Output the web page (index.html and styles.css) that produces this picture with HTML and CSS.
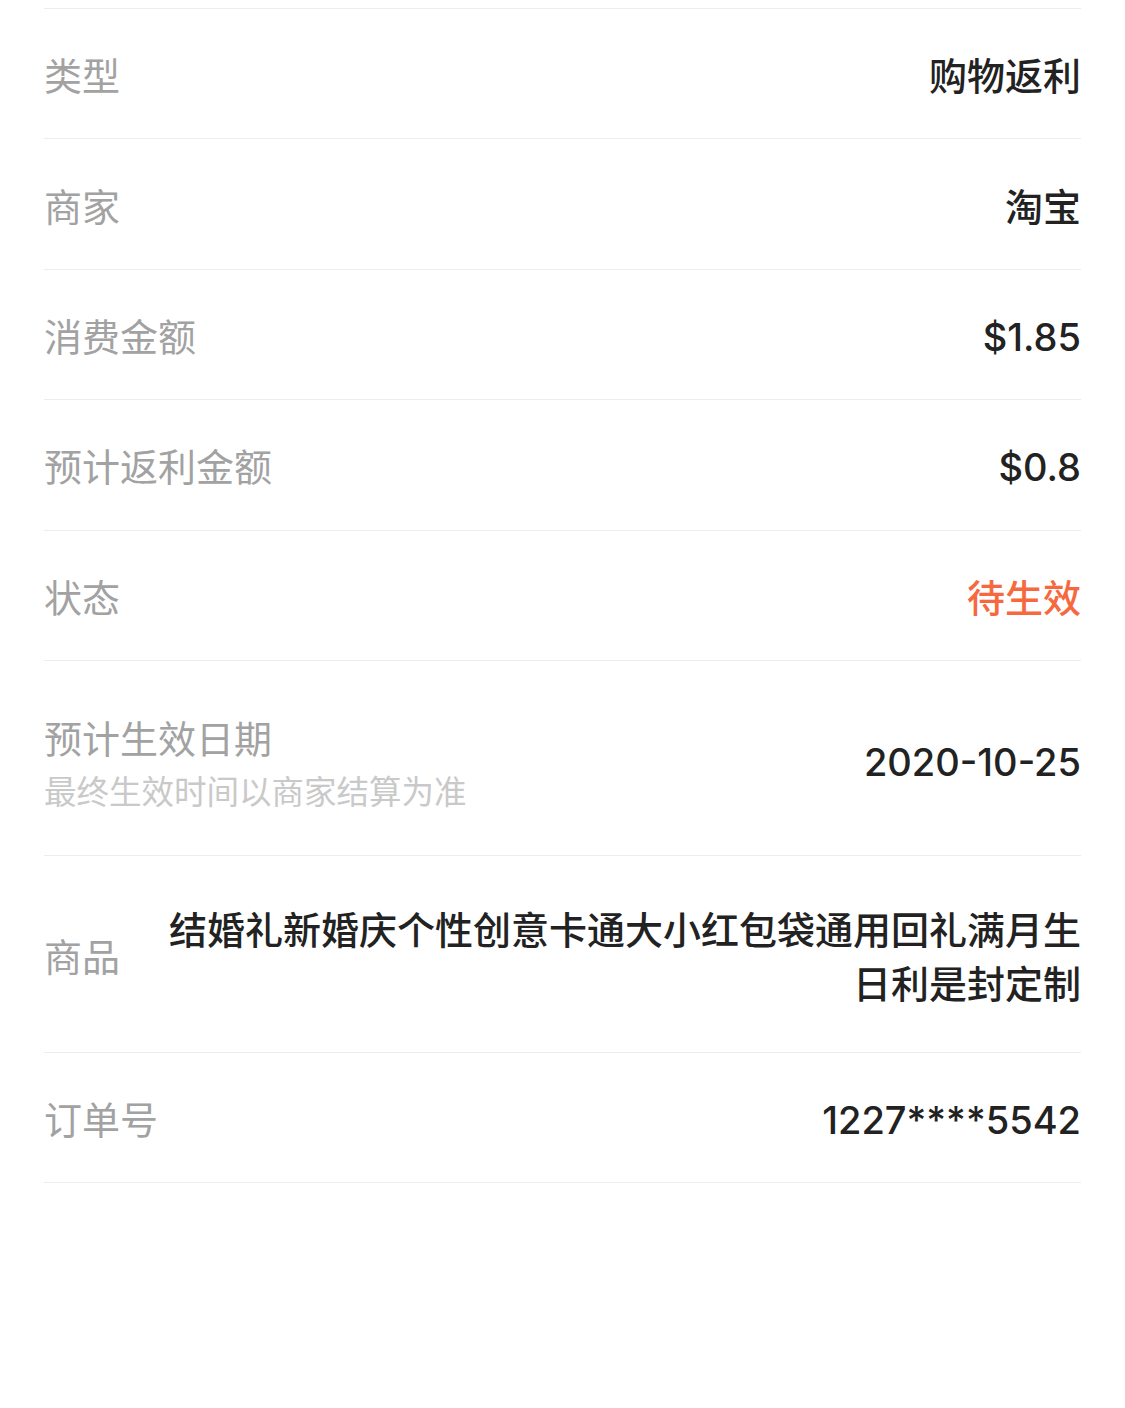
FILE: index.html
```html
<!DOCTYPE html>
<html lang="zh-CN">
<head>
<meta charset="utf-8">
<title>返利详情</title>
<link rel="stylesheet" href="styles.css">
</head>
<body>
<div class="detail">
  <div class="row">
    <div class="label">类型</div>
    <div class="value">购物返利</div>
  </div>
  <div class="row">
    <div class="label">商家</div>
    <div class="value">淘宝</div>
  </div>
  <div class="row">
    <div class="label">消费金额</div>
    <div class="value">$1.85</div>
  </div>
  <div class="row">
    <div class="label">预计返利金额</div>
    <div class="value">$0.8</div>
  </div>
  <div class="row">
    <div class="label">状态</div>
    <div class="value value-pending">待生效</div>
  </div>
  <div class="row row-tall">
    <div class="label-group">
      <div class="label">预计生效日期</div>
      <div class="sublabel">最终生效时间以商家结算为准</div>
    </div>
    <div class="value">2020-10-25</div>
  </div>
  <div class="row row-multi">
    <div class="label">商品</div>
    <div class="value value-wrap">结婚礼新婚庆个性创意卡通大小红包袋通用回礼满月生日利是封定制</div>
  </div>
  <div class="row row-last">
    <div class="label">订单号</div>
    <div class="value">1227****5542</div>
  </div>
</div>
</body>
</html>
```

FILE: styles.css
```css
html, body {
  margin: 0;
  padding: 0;
  background: #ffffff;
}

body {
  font-family: "Inter", "Noto Sans CJK SC", "Noto Sans", sans-serif;
  font-size: 38px;
  color: #222222;
}

.detail {
  padding: 8px 44px 0 44px;
}

.row {
  display: flex;
  align-items: center;
  justify-content: space-between;
  min-height: 130.4px;
  box-sizing: border-box;
  padding-top: 5px;
  border-top: 1px solid #ededed;
}

.row-last {
  min-height: 131.4px;
  border-bottom: 1px solid #ededed;
}

.row-tall {
  padding: 44px 0 36px 0;
}

.row-multi {
  padding: 47px 0 41px 0;
}

.label {
  color: #a2a2a2;
  line-height: 52px;
  white-space: nowrap;
  flex-shrink: 0;
}

.label-group {
  display: flex;
  flex-direction: column;
  gap: 2px;
  padding-top: 8px;
}

.sublabel {
  color: #c9c9c9;
  font-size: 32.5px;
  line-height: 52px;
  white-space: nowrap;
}

.value {
  color: #222222;
  font-weight: 500;
  line-height: 54px;
  text-align: right;
}

.value-pending {
  color: #f6693f;
}

.value-wrap {
  flex: 1;
  margin-left: 48px;
}
```
